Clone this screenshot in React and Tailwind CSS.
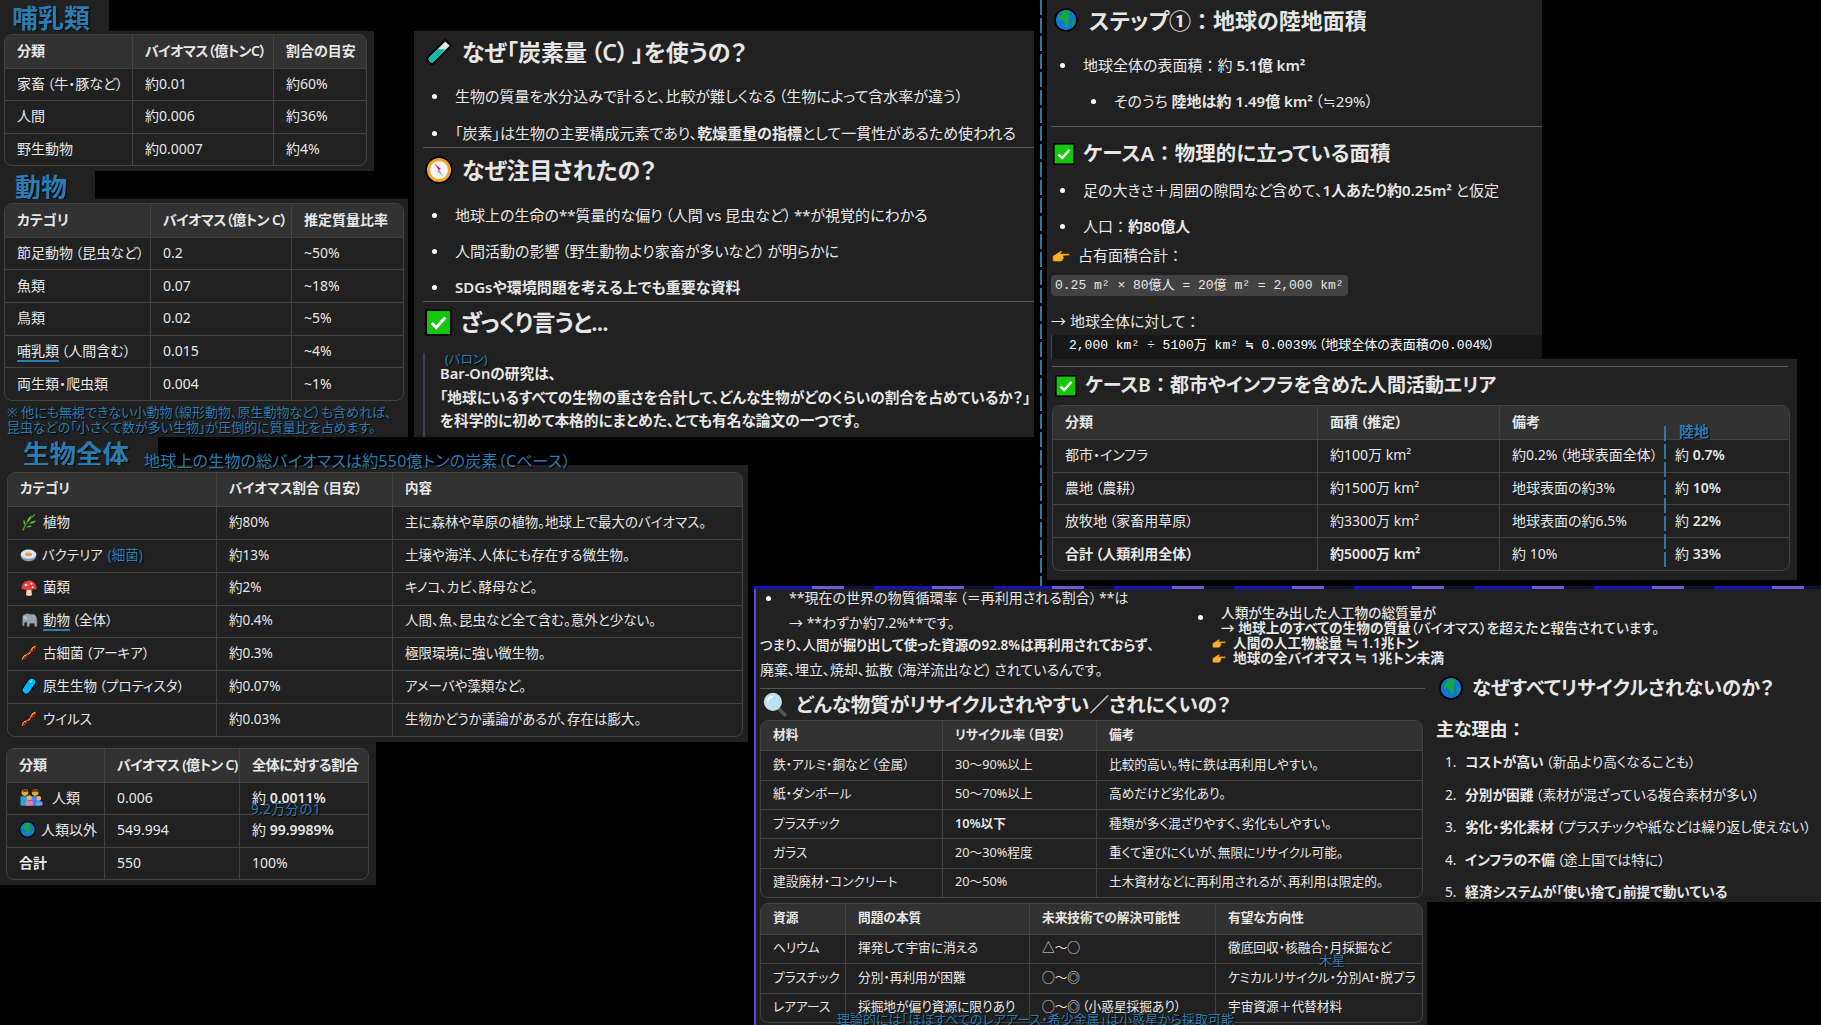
import React from "react"

const blue = "text-[#2b7cb0] [text-shadow:1px_1px_1px_#000]"
const mono = "font-['Liberation_Mono','Noto_Sans_CJK_JP',monospace]"

// palt makes brackets and colons too tight, so give them a little air back
const P = (s) => s.replace(/（/g, "\u2009（").replace(/）/g, "）\u2009").replace(/：/g, "\u2005：\u2005")

const Outline = ({ size, children, className = "" }) => (
  <svg viewBox="0 0 24 24" width={size} height={size} className={`shrink-0 ${className}`}>{children}</svg>
)

const CheckIcon = ({ size = 22 }) => (
  <Outline size={size}>
    <rect x="1" y="1" width="22" height="22" fill="#16c60c" stroke="#000" strokeWidth="1.6" />
    <path d="M6 12.5l4 4 8-9" fill="none" stroke="#fff" strokeWidth="2.6" />
  </Outline>
)

const GlobeIcon = ({ size = 24 }) => (
  <Outline size={size}>
    <circle cx="12" cy="12" r="11" fill="#0f78d4" stroke="#000" strokeWidth="1.6" />
    <path d="M8 3.5c3-1.5 7-1 9 .5l-2 2 2 3-3 1 1.5 5-3 5-1.5-4-1-3-4-1-2-3 2-2 2-.5z" fill="#16a34a" />
    <path d="M18 13l3-1-.8 4-2 2z" fill="#16a34a" />
  </Outline>
)

const TubeIcon = () => (
  <Outline size={30}>
    <path d="M17 1l6 6L8 22c-2.500 2.500-8.500-3.500-6-6z" fill="#0c0c0c" />
    <path d="M17 3.500l3.500 3.500L7.500 20c-1.500 1.500-5-2-3.500-3.500z" fill="#dbe7ea" />
    <path d="M11 9.500l6.500.500L7.500 20c-1.500 1.500-5-2-3.500-3.500z" fill="#14b8a6" />
  </Outline>
)

const CompassIcon = () => (
  <Outline size={28}>
    <circle cx="12" cy="12" r="11" fill="#f5a623" stroke="#000" strokeWidth="1.4" />
    <circle cx="12" cy="12" r="7.800" fill="#f4f4f4" />
    <path d="M8 6.500l5.500 4.500-1.500 1.500z" fill="#e11d48" />
    <path d="M16 17.500L10.500 13l1.500-1.500z" fill="#9ca3af" />
  </Outline>
)

const HandIcon = ({ w = 18, h = 13 }) => (
  <svg viewBox="0 0 24 17" width={w} height={h} className="shrink-0">
    <path d="M1 16V9l5-3 6-4 1.500 1.500-2 2.500H23v2.500l-8 .5 1 2-1 2-1 2-2 1.500H5z" fill="#f7b32b" stroke="#5a3b00" strokeWidth=".8" />
  </svg>
)

const HerbIcon = () => (
  <Outline size={18}>
    <path d="M4 23C7 14 12 8 20 2" fill="none" stroke="#3f9c1f" strokeWidth="2" />
    <path d="M9 13c0-5 3-8 7-10-1 4-3 8-7 10zM12 14c3-3 6-4 10-4-2 3-5 5-10 4zM6 17c-2-3-2-6-1-9 2 3 3 6 1 9zM8 19c2-2 5-3 8-2-2 2-5 3-8 2z" fill="#7ac943" stroke="#14300a" strokeWidth=".6" />
  </Outline>
)

const DishIcon = () => (
  <Outline size={17}>
    <ellipse cx="12" cy="14" rx="11" ry="7.500" fill="#8a99a6" />
    <ellipse cx="12" cy="11.500" rx="11" ry="6.500" fill="#d9e3ea" />
    <ellipse cx="12" cy="11.500" rx="5" ry="2.500" fill="#e89a55" />
  </Outline>
)

const MushroomIcon = () => (
  <Outline size={18}>
    <path d="M9 13h6l1 8c0 2-8 2-8 0z" fill="#fbd3b5" />
    <path d="M2 13C2 6 7 2 12 2s10 4 10 11c-3 2-17 2-20 0z" fill="#ef3b3b" />
    <circle cx="8" cy="8" r="1.800" fill="#fff" /><circle cx="15" cy="6" r="1.500" fill="#fff" /><circle cx="17" cy="11" r="1.300" fill="#fff" />
  </Outline>
)

const ElephantIcon = () => (
  <Outline size={18}>
    <path d="M5 5c3-2 6-2 8-1h5c3 1 5 4 5 8v9h-4v-4h-6v4H9v-6l-3 1v4H3V9c0-2 1-3 2-4z" fill="#9aa3aa" stroke="#2e3338" strokeWidth=".8" />
    <path d="M4 7C7 6 10 8 10 12c-3 0-5-1-6-5z" fill="#bcc3c8" />
  </Outline>
)

const DnaIcon = () => (
  <Outline size={18}>
    <path d="M3 21C4 13 10 16 13 12s1-7 8-9" fill="none" stroke="#000" strokeWidth="3" />
    <path d="M3 21C10 20 8 13 12 11s7 0 9-8" fill="none" stroke="#000" strokeWidth="3" />
    <path d="M3 21C4 13 10 16 13 12s1-7 8-9" fill="none" stroke="#f0b429" strokeWidth="1.800" />
    <path d="M3 21C10 20 8 13 12 11s7 0 9-8" fill="none" stroke="#d62828" strokeWidth="1.800" />
  </Outline>
)

const PillIcon = () => (
  <Outline size={18}>
    <rect x="6.500" y="0" width="11" height="24" rx="5.500" transform="rotate(35 12 12)" fill="#00b7ff" stroke="#000" strokeWidth="1.400" />
    <path d="M13 7l3-2" stroke="#bfefff" strokeWidth="1.500" />
  </Outline>
)

const FamilyIcon = () => (
  <svg viewBox="0 0 34 24" width="25" height="18" className="shrink-0">
    <circle cx="8" cy="6" r="4.500" fill="#e9a23b" /><path d="M4 4c2-3 7-3 8 1-3 0-6 0-8-1z" fill="#5b2e0e" />
    <rect x="2" y="11" width="12" height="13" rx="2" fill="#22a7d8" />
    <circle cx="22" cy="6" r="4.500" fill="#e9a23b" /><path d="M17 6c0-5 9-6 10 0-3-2-7-2-10 0z" fill="#5b2e0e" />
    <rect x="16" y="11" width="12" height="13" rx="2" fill="#3b82f6" />
    <circle cx="14" cy="13" r="3.500" fill="#f0b04f" /><rect x="9" y="17" width="10" height="7" rx="2" fill="#f478a8" />
    <circle cx="27" cy="14" r="3.200" fill="#f0b04f" /><rect x="23" y="18" width="9" height="6" rx="2" fill="#60a5fa" />
  </svg>
)

const LensIcon = () => (
  <Outline size={25}>
    <path d="M14 15l8 8" stroke="#555" strokeWidth="3.500" />
    <circle cx="9.500" cy="9.500" r="8" fill="#b7e3f7" stroke="#cfd8dc" strokeWidth="1.500" />
    <path d="M4.500 9c.5-3 2.500-4.500 5-4.500" fill="none" stroke="#fff" strokeWidth="1.500" />
  </Outline>
)

const DataTable = ({ box, grid, head, rows, skip }) => (
  <div className={`${box} grid auto-rows-fr rounded-lg border border-[#424242] overflow-hidden`}>
    {[head, ...rows].map((row, r) => (
      <div key={r} className={`${grid} ${r === 0 ? "bg-[#323232] font-semibold" : "border-t border-[#424242]"}`}>
        {row.map((cell, c) => (
          <div key={c} className={`flex items-center gap-[5px] whitespace-nowrap pl-3 pb-[2px] ${c > 0 && c !== skip ? "border-l border-[#424242]" : ""}`}>
            {typeof cell === "string" ? P(cell) : cell}
          </div>
        ))}
      </div>
    ))}
  </div>
)

const Heading = ({ icon, text, className }) => (
  <div className={`flex items-center font-semibold ${className}`}>
    {icon}
    <span>{P(text)}</span>
  </div>
)

const Li = ({ className = "", children }) => (
  <li className={`relative list-none before:content-[''] before:absolute before:left-[-23px] before:top-[10px] before:size-[5px] before:rounded-full before:bg-white ${className}`}>
    {children}
  </li>
)

const Num = ({ n, children }) => (
  <li className="flex list-none">
    <span className="w-[20px] shrink-0">{n}.</span>
    <span>{children}</span>
  </li>
)

const Under = ({ children }) => <span className="border-b-2 border-[#2b7cb0] leading-[17px]">{children}</span>

export default function App() {
  return (
    <div className="relative w-[1821px] h-[1025px] overflow-hidden bg-black text-[#e6e6e6] text-[14px] font-['Noto_Sans','Noto_Sans_CJK_JP',sans-serif] [font-feature-settings:'palt']">
      {/* 哺乳類 */}
      <div className={`absolute left-0 top-0 w-[109px] h-[31px] bg-[#212121] pl-3 text-[26px] font-semibold leading-[36px] ${blue}`}>哺乳類</div>
      <div className="absolute left-0 top-[31px] w-[374px] h-[140px] bg-[#212121] pl-1 pt-[3px]">
        <DataTable
          box="w-[363px] h-[132px]"
          grid="grid grid-cols-[127px_141px_95px]"
          head={["分類", <span key="h" className="tracking-[-.6px]">バイオマス（億トンC）</span>, "割合の目安"]}
          rows={[
            ["家畜（牛・豚など）", "約0.01", "約60%"],
            ["人間", "約0.006", "約36%"],
            ["野生動物", "約0.0007", "約4%"],
          ]}
        />
      </div>

      {/* 動物 */}
      <div className={`absolute left-0 top-[171px] w-[95px] h-[28px] bg-[#212121] pl-[15px] text-[26px] font-semibold leading-[32px] ${blue}`}>動物</div>
      <div className="absolute left-0 top-[199px] w-[408px] h-[238px] bg-[#212121] pl-1 pt-1">
        <DataTable
          box="w-[400px] h-[198px]"
          grid="grid grid-cols-[145px_141px_114px]"
          head={["カテゴリ", <span key="h" className="tracking-[-.6px]">バイオマス（億トン C）</span>, "推定質量比率"]}
          rows={[
            ["節足動物（昆虫など）", "0.2", "~50%"],
            ["魚類", "0.07", "~18%"],
            ["鳥類", "0.02", "~5%"],
            [<span key="a"><Under>哺乳類</Under>{P("（人間含む）")}</span>, "0.015", "~4%"],
            ["両生類・爬虫類", "0.004", "~1%"],
          ]}
        />
        <p className={`mt-[4px] ml-[3px] text-[13px] leading-[15px] ${blue}`}>
          ※ 他にも無視できない小動物（線形動物、原生動物など）も含めれば、<br />
          昆虫などの「小さくて数が多い生物」が圧倒的に質量比を占めます。
        </p>
      </div>

      {/* 生物全体 */}
      <div className={`absolute left-0 top-[437px] w-[158px] h-[28px] bg-[#212121] pl-[23px] text-[26.500px] font-semibold leading-[34px] ${blue}`}>生物全体</div>
      <div className="absolute left-0 top-[465px] w-[748px] h-[277px] bg-[#212121] pl-[7px] pt-[7px]">
        <DataTable
          box="w-[736px] h-[265px] text-[13.500px]"
          grid="grid grid-cols-[208px_176px_350px]"
          head={["カテゴリ", "バイオマス割合（目安）", "内容"]}
          rows={[
            [<><HerbIcon />植物</>, "約80%", "主に森林や草原の植物。地球上で最大のバイオマス。"],
            [<><DishIcon />バクテリア<span className={blue}>(細菌)</span></>, "約13%", "土壌や海洋、人体にも存在する微生物。"],
            [<><MushroomIcon />菌類</>, "約2%", "キノコ、カビ、酵母など。"],
            [<><ElephantIcon /><span><Under>動物</Under>{P("（全体）")}</span></>, "約0.4%", "人間、魚、昆虫など全て含む。意外と少ない。"],
            [<><DnaIcon />{P("古細菌（アーキア）")}</>, "約0.3%", "極限環境に強い微生物。"],
            [<><PillIcon />{P("原生生物（プロティスタ）")}</>, "約0.07%", "アメーバや藻類など。"],
            [<><DnaIcon />ウイルス</>, "約0.03%", "生物かどうか議論があるが、存在は膨大。"],
          ]}
        />
      </div>
      <div className={`absolute left-[144px] top-[451px] text-[16px] leading-[20px] tracking-[.2px] whitespace-nowrap ${blue}`}>地球上の生物の総バイオマスは約550億トンの炭素（Cベース）</div>
      <div className="absolute left-0 top-[742px] w-[376px] h-[143px] bg-[#212121] pl-[6px] pt-[6px]">
        <DataTable
          box="w-[363px] h-[132px]"
          grid="grid grid-cols-[97px_135px_131px]"
          head={["分類", <span key="h" className="tracking-[-.7px]">バイオマス (億トン C)</span>, <span key="g" className="tracking-[-.3px]">全体に対する割合</span>]}
          rows={[
            [<><FamilyIcon /><span className="ml-[3px]">人類</span></>, "0.006", <span key="a">約 <b className="font-semibold">0.0011%</b></span>],
            [<><GlobeIcon size={17} />人類以外</>, "549.994", <span key="b">約 <b className="font-semibold">99.9989%</b></span>],
            [<b key="c" className="font-semibold">合計</b>, "550", "100%"],
          ]}
        />
        <span className={`absolute left-[251px] top-[60px] text-[13.500px] leading-[14px] tracking-[.5px] ${blue}`}>9.2万分の1</span>
      </div>

      {/* 炭素量 */}
      <div className="absolute left-[414px] top-[31px] w-[620px] h-[406px] bg-[#212121] overflow-hidden text-[15px]">
        <Heading className="h-[42px] pl-[10px] gap-[8px] text-[23px]" icon={<TubeIcon />} text="なぜ「炭素量（C）」を使うの？" />
        <ul className="pl-[41px] mt-[11px] flex flex-col gap-[13px] leading-[24px]">
          <Li>{P("生物の質量を水分込みで計ると、比較が難しくなる（生物によって含水率が違う）")}</Li>
          <Li>「炭素」は生物の主要構成元素であり、<b className="font-semibold">乾燥重量の指標</b>として一貫性があるため使われる</Li>
        </ul>
        <hr className="ml-[9px] mt-[2px] border-[#555]" />
        <Heading className="h-[44px] pl-[11px] gap-[9px] text-[23px]" icon={<CompassIcon />} text="なぜ注目されたの？" />
        <ul className="pl-[41px] mt-[11px] flex flex-col gap-3 leading-[24px]">
          <Li>{P("地球上の生命の**質量的な偏り（人間 vs 昆虫など）**が視覚的にわかる")}</Li>
          <Li>{P("人間活動の影響（野生動物より家畜が多いなど）が明らかに")}</Li>
          <Li className="font-semibold">SDGsや環境問題を考える上でも重要な資料</Li>
        </ul>
        <hr className="ml-[9px] mt-[2px] border-[#555]" />
        <Heading className="h-[40px] pl-[11px] gap-[9px] text-[23px] tracking-[-.8px]" icon={<CheckIcon size={27} />} text="ざっくり言うと..." />
        <blockquote className="relative mt-[11px] ml-[9px] h-[84px] border-l-2 border-[#3a4252] pl-[15px] pt-[9px] text-[14.700px] font-semibold leading-[23.500px] whitespace-nowrap">
          <span className={`absolute left-[20px] top-0 text-[12.500px] font-normal leading-[14px] ${blue}`}>(バロン)</span>
          Bar-Onの研究は、<br />
          「地球にいるすべての生物の重さを合計して、どんな生物がどのくらいの割合を占めているか？」<br />
          を科学的に初めて本格的にまとめた、とても有名な論文の一つです。
        </blockquote>
      </div>
      <div className="absolute left-[1040px] top-0 w-[2px] h-[587px] bg-[repeating-linear-gradient(180deg,#2b79a8_0px,#2b79a8_15px,transparent_15px,transparent_18px)]" />

      {/* ステップ① */}
      <div className="absolute left-[1047px] top-0 w-[495px] h-[359px] bg-[#212121] overflow-hidden text-[15px]">
        <Heading className="h-[40px] pl-[7px] gap-[11px] text-[22px]" icon={<GlobeIcon />} text="ステップ①：地球の陸地面積" />
        <ul className="pl-[36px] mt-[13px] leading-[24px]">
          <Li>{P("地球全体の表面積：")}約 <b className="font-semibold">5.1億 km²</b>
            <ul className="pl-[31px] mt-[12px]">
              <Li>そのうち <b className="font-semibold">陸地は約 1.49億 km²</b>{P("（≒29%）")}</Li>
            </ul>
          </Li>
        </ul>
        <hr className="ml-1 mt-[13px] border-[#555]" />
        <Heading className="h-[53px] pl-[6px] gap-2 text-[20.500px]" icon={<CheckIcon />} text="ケースA：物理的に立っている面積" />
        <ul className="pl-[36px] flex flex-col gap-3 mt-[-2px] leading-[24px]">
          <Li>足の大きさ＋周囲の隙間など含めて、<b className="font-semibold">1人あたり約0.25m²</b> と仮定</Li>
          <Li>{P("人口：")}<b className="font-semibold">約80億人</b></Li>
        </ul>
        <div className="flex items-center h-[20px] mt-[7px] pl-[5px] gap-2"><HandIcon />{P("占有面積合計：")}</div>
        <div className={`mt-[10px] ml-1 w-[297px] h-[21px] rounded bg-[#424242] pl-1 text-[13px] leading-[22px] whitespace-nowrap ${mono}`}>0.25 m² × 80億人 = 20億 m² = 2,000 km²</div>
        <p className="mt-[14px] ml-1 leading-[22px]">{P("→ 地球全体に対して：")}</p>
        <div className={`mt-[3px] ml-1 h-[26px] border-l border-[#424242] bg-[#181818] pl-[17px] text-[13px] leading-[22px] text-white whitespace-nowrap ${mono}`}>{P("2,000 km² ÷ 5100万 km² ≒ 0.0039%（地球全体の表面積の0.004%）")}</div>
      </div>

      {/* ケースB */}
      <div className="absolute left-[1047px] top-[359px] w-[750px] h-[221px] bg-[#212121]">
        <hr className="ml-[5px] mr-[9px] mt-[7px] border-[#555]" />
        <Heading className="h-[37px] mb-[1px] pl-[8px] gap-2 text-[19px]" icon={<CheckIcon />} text="ケースB：都市やインフラを含めた人間活動エリア" />
        <div className="relative ml-[5px]">
          <DataTable
            box="w-[738px] h-[166px]"
            grid="grid grid-cols-[264px_182px_164px_126px]"
            skip={3}
            head={["分類", "面積（推定）", "備考", ""]}
            rows={[
              ["都市・インフラ", "約100万 km²", "約0.2%（地球表面全体）", <span key="a">約 <b className="font-semibold">0.7%</b></span>],
              ["農地（農耕）", "約1500万 km²", "地球表面の約3%", <span key="b">約 <b className="font-semibold">10%</b></span>],
              ["放牧地（家畜用草原）", "約3300万 km²", "地球表面の約6.5%", <span key="c">約 <b className="font-semibold">22%</b></span>],
              [<b key="d" className="font-semibold">{P("合計（人類利用全体）")}</b>, <b key="e" className="font-semibold">約5000万 km²</b>, "約 10%", <span key="f">約 <b className="font-semibold">33%</b></span>],
            ]}
          />
          <div className="absolute left-[612px] top-[21px] w-[2px] h-[143px] bg-[repeating-linear-gradient(180deg,#2b79a8_0px,#2b79a8_15px,transparent_15px,transparent_18px)]" />
          <span className={`absolute left-[627px] top-[17px] text-[15px] font-semibold leading-[18px] ${blue}`}>陸地</span>
        </div>
      </div>

      {/* リサイクル */}
      <div className="absolute left-[754px] top-[587px] w-[673px] h-[438px] bg-[#212121] border-l-2 border-[#5a4ae0] overflow-hidden">
        <ul className="pl-[33px] leading-[24px] mt-[-1px]">
          <Li>{P("**現在の世界の物質循環率（＝再利用される割合）**は")}</Li>
          <li className="list-none mt-[1px]">→ **わずか約7.2%**です。</li>
        </ul>
        <p className="mt-[-2px] ml-1 text-[13.500px] font-medium leading-[24px]">つまり、人間が<span className="font-semibold">掘り出して使った資源の92.8%は再利用されておらず</span>、</p>
        <p className="mt-[1px] ml-1 leading-[24px]">{P("廃棄、埋立、焼却、拡散（海洋流出など）されているんです。")}</p>
        <hr className="ml-1 mr-[2px] mt-[6px] border-[#555]" />
        <Heading className="h-[31px] pl-[7px] gap-[8px] text-[19.500px]" icon={<LensIcon />} text="どんな物質がリサイクルされやすい／されにくいの？" />
        <div className="ml-1 flex flex-col gap-[5px] text-[12.700px]">
          <DataTable
            box="w-[663px] h-[178px]"
            grid="grid grid-cols-[181px_154px_326px]"
            head={["材料", "リサイクル率（目安）", "備考"]}
            rows={[
              ["鉄・アルミ・銅など（金属）", "30〜90%以上", "比較的高い。特に鉄は再利用しやすい。"],
              ["紙・ダンボール", "50〜70%以上", "高めだけど劣化あり。"],
              ["プラスチック", <b key="a" className="font-semibold">10%以下</b>, "種類が多く混ざりやすく、劣化もしやすい。"],
              ["ガラス", "20〜30%程度", "重くて運びにくいが、無限にリサイクル可能。"],
              ["建設廃材・コンクリート", "20〜50%", "土木資材などに再利用されるが、再利用は限定的。"],
            ]}
          />
          <DataTable
            box="w-[663px] h-[120px]"
            grid="grid grid-cols-[84px_184px_186px_207px]"
            head={["資源", "問題の本質", "未来技術での解決可能性", "有望な方向性"]}
            rows={[
              ["ヘリウム", "揮発して宇宙に消える", "△〜◯", "徹底回収・核融合・月採掘など"],
              ["プラスチック", "分別・再利用が困難", "◯〜◎", "ケミカルリサイクル・分別AI・脱プラ"],
              ["レアアース", "採掘地が偏り資源に限りあり", "◯〜◎（小惑星採掘あり）", "宇宙資源＋代替材料"],
            ]}
          />
        </div>
        <span className={`absolute left-[563px] top-[366px] text-[13px] leading-[14px] ${blue}`}>木星</span>
        <span className={`absolute left-[81px] top-[425px] text-[13px] leading-[14px] whitespace-nowrap ${blue}`}>理論的には「ほぼすべてのレアアース・希少金属」は小惑星から採取可能</span>
      </div>

      {/* 理由 */}
      <div className="absolute left-[1427px] top-[587px] w-[394px] h-[315px] bg-[#212121] overflow-hidden">
        <Heading className="mt-[84px] h-[34px] pl-3 gap-[9px] text-[19.300px]" icon={<GlobeIcon />} text="なぜすべてリサイクルされないのか？" />
        <p className="mt-[12px] ml-[9px] text-[18px] font-semibold leading-[24px]">{P("主な理由：")}</p>
        <ol className="pl-[18px] mt-[9px] flex flex-col gap-[8.500px] text-[13.700px] leading-[24px]">
          <Num n={1}><b className="font-semibold">コストが高い</b>{P("（新品より高くなることも）")}</Num>
          <Num n={2}><b className="font-semibold">分別が困難</b>{P("（素材が混ざっている複合素材が多い）")}</Num>
          <Num n={3}><b className="font-semibold">劣化・劣化素材</b>{P("（プラスチックや紙などは繰り返し使えない）")}</Num>
          <Num n={4}><b className="font-semibold">インフラの不備</b>{P("（途上国では特に）")}</Num>
          <Num n={5}><b className="font-semibold">経済システムが「使い捨て」前提で動いている</b></Num>
        </ol>
      </div>

      {/* 人工物 */}
      <div className="absolute left-[1190px] top-[605px] w-[480px] text-[13.700px] leading-[15px]">
        <ul className="pl-[31px]">
          <Li className="font-medium before:top-[5px] before:left-[-21px]">人類が生み出した人工物の総質量が<br />→ <span className="font-semibold">地球上のすべての生物の質量</span>（バイオマス）を超えたと報告されています。</Li>
        </ul>
        <div className="flex items-center gap-[7px] pl-[22px] font-semibold"><HandIcon w={14} h={10} />人間の人工物総量 ≒ 1.1兆トン</div>
        <div className="flex items-center gap-[7px] pl-[22px] font-semibold"><HandIcon w={14} h={10} />地球の全バイオマス ≒ 1兆トン未満</div>
      </div>
      <div className="absolute left-[754px] top-[586px] w-[1067px] h-[3px] bg-[repeating-linear-gradient(90deg,#1212c4_0px,#1212c4_58px,#6a5ae0_58px,#6a5ae0_90px,#101030_90px,#101030_120px)]" />
    </div>
  )
}
